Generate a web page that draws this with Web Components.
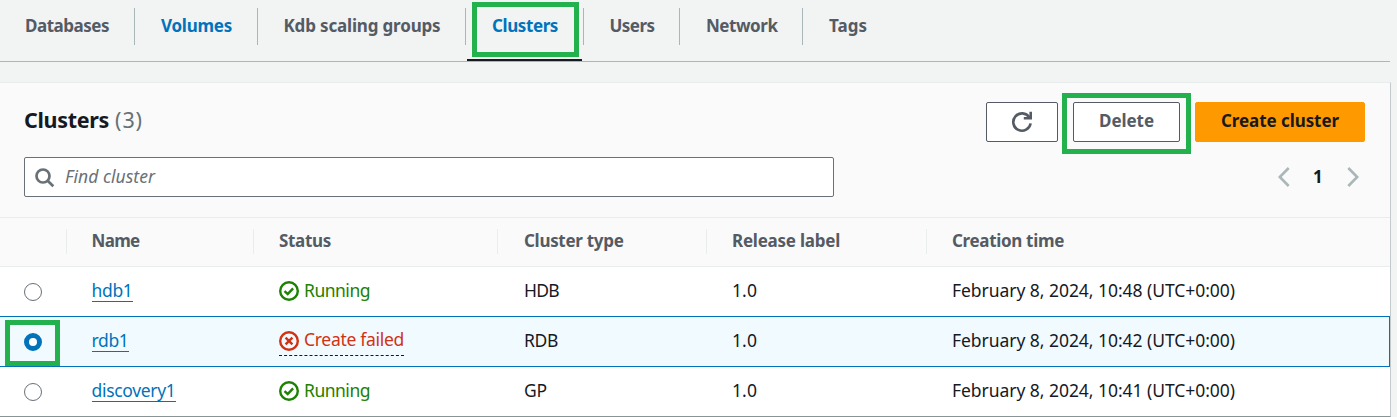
<!DOCTYPE html>
<html lang="en">
<head>
<meta charset="utf-8">
<title>Clusters</title>
<style>
html,body{margin:0;height:100%}
body{background:#f2f3f3;font-family:"Noto Sans","Open Sans",sans-serif;font-size:17.5px;color:#16191f;overflow:hidden}
</style>
</head>
<body>
<cluster-page></cluster-page>
<script>
const define = (name, html, setup) => {
  const template = document.createElement('template');
  template.innerHTML = html;
  customElements.define(name, class extends HTMLElement {
    constructor() {
      super();
      this.attachShadow({mode: 'open'}).append(template.content.cloneNode(true));
    }
    connectedCallback() { if (setup) setup(this, this.shadowRoot); }
  });
};

/* Text run whose tracking is adjusted to reach the width given in "w". */
define('ui-text', `<style>
:host{display:inline-block;white-space:nowrap;line-height:22px;padding-bottom:2px}
span{display:inline-block}</style><span><slot></slot></span>`, (el, root) => {
  const span = root.querySelector('span');
  const want = Number(el.getAttribute('w'));
  const count = el.textContent.length;
  const extra = (want - span.getBoundingClientRect().width) / count;
  span.style.letterSpacing = extra.toFixed(3) + 'px';
  el.style.width = want + 'px';
});

define('ui-highlight', `<style>
:host{position:absolute;box-sizing:border-box;border:5px solid #22b14c;z-index:3;pointer-events:none}
</style>`);

define('ui-tab', `<style>
:host{display:block;position:relative;box-sizing:border-box;height:61px;padding:14px 0 0 26px;font-weight:700;font-size:17px;color:#545b64}
:host([first]){padding-left:25px}
:host([link]){color:#0073bb}
.sep{position:absolute;right:0;top:8px;height:37px;width:1px;background:#aab7b8}
:host([last]) .sep{display:none}
.bar{display:none;position:absolute;left:1px;right:2px;bottom:0;height:2px;background:#16191f}
:host([active]) .bar{display:block}
</style><slot></slot><i class="sep"></i><i class="bar"></i>`);

define('ui-tabs', `<style>
:host{display:grid;grid-template-columns:135px 123px 208px 118px 96px 123px 1fr;width:1390px;height:61px;border-bottom:1px solid #aab7b8}
ui-highlight{left:6px;top:2px;width:107px;height:55px}
</style>
<ui-tab first><ui-text w="84">Databases</ui-text></ui-tab>
<ui-tab link><ui-text w="71">Volumes</ui-text></ui-tab>
<ui-tab style="padding-left:25.5px"><ui-text w="157">Kdb scaling groups</ui-text></ui-tab>
<ui-tab link active><ui-text w="66">Clusters</ui-text><ui-highlight></ui-highlight></ui-tab>
<ui-tab style="padding-left:25.5px"><ui-text w="45">Users</ui-text></ui-tab>
<ui-tab><ui-text w="71.5">Network</ui-text></ui-tab>
<ui-tab last><ui-text w="38">Tags</ui-text></ui-tab>`);

define('ui-button', `<style>
:host{display:flex;position:relative;box-sizing:border-box;height:40px;border:1px solid #545b64;border-radius:2px;background:#fff;color:#545b64;font-weight:700;font-size:17px;align-items:center;justify-content:center}
:host([primary]){background:#ff9900;border-color:#ff9900;color:#16191f}
</style><slot></slot>`);

define('ui-header', `<style>
:host{display:flex;flex-direction:column;height:134px;box-sizing:border-box;padding:19px 25px 0 24px;background:#fafafa}
.top{display:flex;height:40px;gap:15px}
.title{flex:1;display:flex;gap:6px;font-size:21.5px;line-height:28px;padding-top:4px}
b{font-weight:700}.n{color:#687078}
svg{display:block}
.bottom{display:flex;justify-content:space-between;margin-top:15px}
.search{box-sizing:border-box;width:810px;height:40px;border:1px solid #687078;border-radius:2px;background:#fff;display:flex;align-items:center;padding:0 0 0 10px;gap:10px;font-style:italic;color:#687078}
.search svg{margin-top:1px}
.pager{display:flex;align-items:center;width:81px;justify-content:space-between;margin-right:6px;font-weight:700;font-size:17px}
.pager ui-text{margin:2px 1px 0 0}
</style>
<div class="top">
 <div class="title"><b><ui-text w="85">Clusters</ui-text></b><span class="n"><ui-text w="28">(3)</ui-text></span></div>
 <ui-button style="width:72px"><svg width="22" height="22" viewBox="0 0 22 22" fill="none" stroke="#545b64" stroke-width="2.6"><path d="M19.6 12.4A8.7 8.7 0 1 1 18.3 6.3"/><path d="M19.7 .8V7.3H12.8"/></svg></ui-button>
 <ui-button style="width:107px"><ui-text w="55">Delete</ui-text><ui-highlight style="left:-12px;top:-10px;width:129px;height:61px"></ui-highlight></ui-button>
 <ui-button primary style="width:170px"><ui-text w="118">Create cluster</ui-text></ui-button>
</div>
<div class="bottom">
 <div class="search"><svg width="20" height="20" viewBox="0 0 20 20" fill="none" stroke="#687078" stroke-width="2.7"><circle cx="8" cy="8" r="6.5"/><path d="M12.7 12.7L18.3 18.2"/></svg><ui-text w="90">Find cluster</ui-text></div>
 <div class="pager">
  <svg width="12" height="20" viewBox="0 0 12 20" fill="none" stroke="#aab7b8" stroke-width="2.6"><path d="M10.7 1L1.8 10L10.7 19"/></svg>
  <ui-text w="10">1</ui-text>
  <svg width="12" height="20" viewBox="0 0 12 20" fill="none" stroke="#aab7b8" stroke-width="2.6"><path d="M1.3 1L10.2 10L1.3 19"/></svg>
 </div>
</div>`);

const grid = 'display:grid;grid-template-columns:67px 187px 244px 209px 220px 1fr;box-sizing:border-box;';

define('ui-columns', `<style>
:host{${grid}height:50px;border:1px solid #eaeded;border-width:1px 0;background:#fafafa;font-weight:700;font-size:17px;color:#545b64}
div{height:25px;margin-top:11px;border-right:1px solid #eaeded;padding-left:25px;box-sizing:border-box}
.name{padding-left:24.5px}.type{padding-left:26px}
div:last-child{border:0}
</style>
<div></div><div class="name"><ui-text w="48">Name</ui-text></div><div><ui-text w="52">Status</ui-text></div><div class="type"><ui-text w="99.5">Cluster type</ui-text></div><div><ui-text w="108">Release label</ui-text></div><div><ui-text w="112">Creation time</ui-text></div>`);

define('ui-radio', `<style>
:host{display:block;box-sizing:border-box;width:18px;height:18px;border:1.5px solid #687078;border-radius:50%;background:#fff}
:host([checked]){border:5.5px solid #0073bb}
</style>`);

define('ui-status', `<style>
:host{display:inline-flex;gap:5px;color:#1d8102;height:28px;box-sizing:border-box}
:host([failed]){color:#d13212;border-bottom:1px dashed #16191f;margin-top:-1px}
:host([failed]) svg{margin-top:3px}
:host([failed]) .ok,:host(:not([failed])) .bad{display:none}
svg{margin-top:2px}
</style>
<svg width="20" height="20" viewBox="0 0 20 20" fill="none" stroke="currentColor" stroke-width="2.4"><circle cx="10" cy="10" r="8.8"/><path class="ok" d="M5.5 10.1L8.7 13L14.1 7.3"/><path class="bad" d="M6.6 6.6L13.4 13.4M13.4 6.6L6.6 13.4"/></svg><slot></slot>`);

define('ui-link', `<style>
:host{display:block;width:max-content;height:22px;border-bottom:1px solid #0073bb;color:#0073bb}
</style><slot></slot>`);

define('ui-row', `<style>
:host{${grid}position:relative;height:50px;background:#fff}
:host([selected]){background:#f1faff;box-shadow:inset -1px 0 #0073bb,inset 0 -1px #0073bb,0 -1px #0073bb}
div{padding:12px 0 0 25px;line-height:18px}
.name{padding-left:24.5px}.type{padding-left:26px}
.pick{padding:16px 0 0 24px}
</style>
<div class="pick"><slot name="pick"></slot></div><div class="name"><slot name="name"></slot></div><div><slot name="status"></slot></div><div class="type"><slot name="type"></slot></div><div><slot name="release"></slot></div><div><slot name="time"></slot></div>`);

define('cluster-page', `<style>
:host{display:block;height:417px;overflow:hidden;background:#f2f3f3}
.card{width:1390px;margin-top:20px;border-top:1px solid #eaeded;border-right:1px solid #c3cbcc;border-bottom:1px solid #879596;background:#fff}
ui-row{line-height:18px}
</style>
<ui-tabs></ui-tabs>
<div class="card">
<ui-header></ui-header>
<ui-columns></ui-columns>
<ui-row><ui-radio slot="pick"></ui-radio><ui-link slot="name"><ui-text w="41">hdb1</ui-text></ui-link><ui-status slot="status"><ui-text w="66">Running</ui-text></ui-status><ui-text slot="type" w="35">HDB</ui-text><ui-text slot="release" w="25">1.0</ui-text><ui-text slot="time" w="283">February 8, 2024, 10:48 (UTC+0:00)</ui-text></ui-row>
<ui-row selected><ui-radio slot="pick" checked></ui-radio><ui-highlight slot="pick" style="left:5px;top:3px;width:55px;height:46px"></ui-highlight><ui-link slot="name"><ui-text w="37">rdb1</ui-text></ui-link><ui-status slot="status" failed><ui-text w="100">Create failed</ui-text></ui-status><ui-text slot="type" w="34">RDB</ui-text><ui-text slot="release" w="25">1.0</ui-text><ui-text slot="time" w="283">February 8, 2024, 10:42 (UTC+0:00)</ui-text></ui-row>
<ui-row style="height:49px"><ui-radio slot="pick"></ui-radio><ui-link slot="name"><ui-text w="84">discovery1</ui-text></ui-link><ui-status slot="status"><ui-text w="66">Running</ui-text></ui-status><ui-text slot="type" w="23">GP</ui-text><ui-text slot="release" w="25">1.0</ui-text><ui-text slot="time" w="283">February 8, 2024, 10:41 (UTC+0:00)</ui-text></ui-row>
</div>`);
</script>
</body>
</html>
